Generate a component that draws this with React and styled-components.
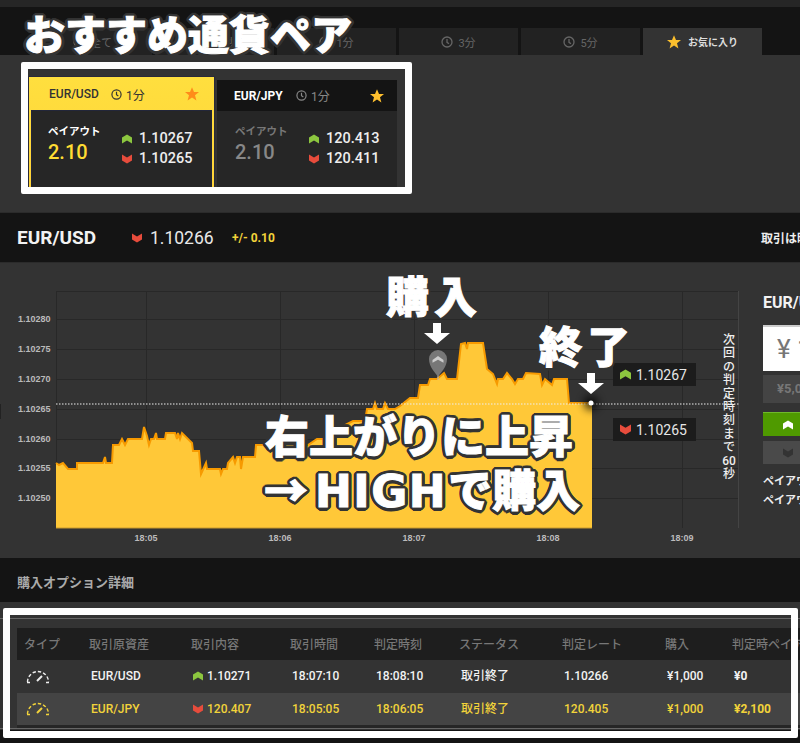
import React from "react";
import styled, { createGlobalStyle } from "styled-components";

const Global = createGlobalStyle`
  html, body { margin: 0; padding: 0; background: #141414; }
  body { font-family: Roboto, "Noto Sans CJK JP", sans-serif; }
  * { box-sizing: border-box; }
`;

const ring = (r, c) =>
  Array.from({ length: 16 }, (_, i) => {
    const a = (i / 16) * Math.PI * 2;
    return `${(Math.cos(a) * r).toFixed(2)}px ${(Math.sin(a) * r).toFixed(2)}px 0 ${c}`;
  }).join(",");

const Page = styled.div`
  position: relative; width: 800px; height: 743px; overflow: hidden;
  display: flex; flex-direction: column; background: #141414;
`;
const TopStrip = styled.div` height: 7px; background: #262626; flex: none; `;
const TabBar = styled.div`
  height: 48px; flex: none; background: #141414; padding: 21px 0 0 33px;
  display: flex; gap: 3px; align-items: stretch;
`;
const Tab = styled.div`
  width: 119px; flex: none; display: flex; align-items: center; justify-content: center; gap: ${p => (p.$active ? "7px" : "5px")};
  background: ${p => (p.$active ? "#333" : "#222")};
  color: ${p => (p.$active ? "#ddd" : "#666")};
  font-size: ${p => (p.$active ? "10px" : "11px")}; font-weight: ${p => (p.$active ? 700 : 400)};
`;
const Recommend = styled.section`
  height: 157px; flex: none; background: #333; display: flex; align-items: flex-start; padding: 22px 0 0 29px; gap: 3px;
`;
const CardShell = styled.div`
  width: ${p => (p.$on ? "185px" : "180px")}; height: ${p => (p.$on ? "115px" : "110px")};
  margin-top: ${p => (p.$on ? "0" : "3px")};
  display: flex; flex-direction: column;
  background: ${p => (p.$on ? "linear-gradient(#ffdf3e,#ffd338)" : "#262626")};
  box-shadow: ${p => (p.$on ? "0 0 0 1px #2a2a3a" : "none")};
`;
const CardHead = styled.div`
  height: ${p => (p.$on ? "34px" : "31px")}; flex: none; display: flex; align-items: center;
  padding: ${p => (p.$on ? "0 15px 0 20px" : "0 13px 0 17px")};
  background: ${p => (p.$on ? "transparent" : "#141414")};
  color: ${p => (p.$on ? "#333" : "#fff")};
  font-size: 12px; font-weight: ${p => (p.$on ? 500 : 700)};
`;
const PairName = styled.span` width: 62px; flex: none; `;
const Dur = styled.span`
  display: flex; align-items: center; gap: 4px; flex: 1; font-weight: 400; font-size: 12px;
  color: ${p => (p.$on ? "#333" : "#888")};
`;
const CardBody = styled.div`
  flex: 1; display: flex; background: #262626;
  margin: ${p => (p.$on ? "0 3px" : "0")};
  padding: ${p => (p.$on ? "14px 0 0 16px" : "14px 0 0 18px")};
  box-shadow: ${p => (p.$on ? "0 0 0 1px #22263a" : "none")};
`;
const Payout = styled.div` width: 74px; flex: none; `;
const PayLabel = styled.div`
  font-size: 10.5px; font-weight: 700; line-height: 14px; color: ${p => (p.$on ? "#fff" : "#777")};
`;
const PayValue = styled.div`
  font-size: 20px; font-weight: 500; line-height: 24px; margin-top: 1px; color: ${p => (p.$on ? "#ffdc33" : "#888")};
`;
const Prices = styled.div` display: flex; flex-direction: column; gap: 3px; padding-top: 5px; `;
const PriceLine = styled.div`
  display: flex; align-items: center; gap: 7px; height: 17px; color: #eee; font-size: 14.5px; font-weight: 500;
`;
const PairBar = styled.section`
  height: 50px; flex: none; background: #141414; display: flex; align-items: center; padding-left: 17px;
  border-top: 1px solid #2b2b2b;
`;
const PairTitle = styled.div` width: 115px; flex: none; color: #f2f2f2; font-size: 19px; font-weight: 700; `;
const PairPrice = styled.div`
  width: 100px; flex: none; display: flex; align-items: center; gap: 8px; color: #e8e8e8; font-size: 17.5px;
`;
const PairDiff = styled.div` width: 529px; flex: none; color: #f2d33a; font-size: 12px; font-weight: 700; `;
const PairNote = styled.div` flex: none; color: #eee; font-size: 12px; font-weight: 700; white-space: nowrap; `;
const ChartSection = styled.section`
  height: 296px; flex: none; background: #333; display: flex; border-top: 1px solid #2b2b2b;
`;
const ChartWrap = styled.div` position: relative; width: 763px; flex: none; `;
const ChartSvg = styled.svg` display: block; width: 763px; height: 296px; `;
const Chip = styled.div`
  position: absolute; left: 613px; top: ${p => p.$top}px; width: 83px; height: 23px; background: #1c1c1c;
  display: flex; align-items: center; gap: 5px; padding-left: 7px; color: #e6e6e6; font-size: 14px;
`;
const Countdown = styled.div`
  position: absolute; left: 719px; top: 71px; width: 20px; display: flex; flex-direction: column; align-items: center;
  color: #eee; font-size: 12px; line-height: 13.4px; font-weight: 500;
`;
const Side = styled.aside` width: 200px; flex: none; padding-top: 30px; `;
const SideTitle = styled.div` color: #f2f2f2; font-size: 16px; font-weight: 700; height: 32px; line-height: 20px; `;
const Amount = styled.div`
  height: 46px; background: #fff; border-top: 2px solid #ccc; color: #777; font-size: 26px; padding-left: 14px; line-height: 44px;
`;
const Quick = styled.div`
  height: 28px; margin-top: 4px; background: #444; color: #777; font-size: 13px; font-weight: 700; line-height: 28px; padding-left: 14px;
`;
const Action = styled.div`
  height: ${p => (p.$high ? "24px" : "23px")}; margin-top: ${p => (p.$high ? "9px" : "5px")};
  background: ${p => (p.$high ? "#4f9a00" : "#4a4a4a")}; border-top: ${p => (p.$high ? "1px solid #6fb82c" : "none")};
  color: #fff; display: flex; align-items: center; gap: 8px; padding-left: 20px; font-size: 11px; font-weight: 700;
`;
const SideNote = styled.div`
  color: #eee; font-size: 11px; font-weight: 700; line-height: 19px; white-space: nowrap;
  margin-top: ${p => (p.$first ? "8px" : "0")};
`;
const DetailBar = styled.div`
  height: 44px; flex: none; background: #141414; color: #aaa; font-size: 13px; font-weight: 700; padding: 17px 0 0 17px; line-height: 16px;
`;
const Detail = styled.section` height: 128px; flex: none; background: #333; padding-top: 16px; `;
const TableBox = styled.div`
  height: 111px; border-top: 1px solid #666; border-bottom: 1px solid #666; padding: 9px 0 0 17px; overflow: hidden;
`;
const Row = styled.div`
  display: grid; grid-template-columns: 65px 102px 99px 84px 85px 103px 103px 67px 130px; align-items: center;
  width: 830px; height: ${p => (p.$head ? "32px" : "32.5px")}; padding-left: ${p => (p.$head ? "7px" : "9px")};
  padding-top: ${p => (p.$head ? "1px" : "0")};
  background: ${p => (p.$head ? "#1e1e1e" : p.$alt ? "#444" : "#333")};
  color: ${p => (p.$head ? "#777" : p.$alt ? "#f2d33a" : "#f2f2f2")};
  font-size: 12px; white-space: nowrap;
`;
const TableEnd = styled.div` height: 3px; width: 830px; background: #262626; `;
const Cell = styled.div`
  display: flex; align-items: center; gap: 4px; line-height: 16px; height: 16px;
  font-weight: ${p => (p.$strong ? 700 : 500)};
`;
const Frame = styled.div`
  position: absolute; left: ${p => p.$x}px; top: ${p => p.$y}px; width: ${p => p.$w}px; height: ${p => p.$h}px;
  border: 7px solid #fff; border-radius: 2px; pointer-events: none;
`;
const Callout = styled.div`
  position: absolute; left: ${p => p.$x}px; top: ${p => p.$y}px; white-space: nowrap;
  font-family: "Noto Sans CJK JP", sans-serif; font-weight: 900; color: #fff; line-height: 1;
  font-size: ${p => p.$size}px; letter-spacing: ${p => p.$ls || 0}px;
  -webkit-text-stroke: 1px #fff;
  text-shadow: ${p => ring(p.$ring, "#333")};
`;
const Wide = styled.span`
  font-family: "DejaVu Sans", sans-serif; font-weight: 700; letter-spacing: 1.5px; margin: 0 1px 0 7px;
`;
const CalloutArrow = styled.svg` position: absolute; left: ${p => p.$x}px; top: ${p => p.$y}px; `;

const Up = ({ c = "#8cc63f", s = 10 }) => (
  <svg width={s} height={s} viewBox="0 0 10 10"><path d="M0 3.500 5 .5l5 3V9.500L5 6.500 0 9.500Z" fill={c} /></svg>
);
const Down = ({ c = "#e74c3c", s = 10 }) => (
  <svg width={s} height={s} viewBox="0 0 10 10"><path d="M0 .5 5 3.500l5-3V6.500l-5 3-5-3Z" fill={c} /></svg>
);
const Clock = ({ c, s = 11 }) => (
  <svg width={s} height={s} viewBox="0 0 12 12" fill="none" stroke={c} strokeWidth="1.3"><circle cx="6" cy="6" r="5" /><path d="M6 3v3.300l2 1.400" /></svg>
);
const Star = ({ c, s = 14 }) => (
  <svg width={s} height={s} viewBox="0 0 14 14"><path d="M7 .3 9 5h5l-4 3.200L11.400 13.600 7 10.600 2.600 13.600 4 8.200 0 5h5Z" fill={c} /></svg>
);
const Gauge = ({ c }) => (
  <svg width="24" height="15" viewBox="0 3 24 15" fill="none" stroke={c} strokeWidth="1.4">
    <path d="M1.500 16a10.500 10.500 0 0 1 21 0" strokeDasharray="3.400 2" />
    <path d="M1 16.500h3M20 16.500h3" />
    <path d="M11 15l5-5" strokeWidth="2" />
  </svg>
);

const area = "56,462 59,464 63,462 68,468 77,468 77,462 103,462 105,456 106,462 112,462 113,444 119,444 122,438 125,444 128,438 142,438 144,426 147,435 149,444 151,438 154,438 156,432 157,438 165,438 166,432 175,432 177,438 178,432 180,438 182,432 192,442 193,450 199,450 201,473 206,462 207,468 220,468 221,473 223,468 227,468 228,462 233,456 235,462 237,456 240,456 241,468 243,456 255,456 256,444 263,444 272,438 300,444 308,444 317,438 330,438 345,424 353,420 365,420 367,408 373,408 375,402 377,408 383,408 385,402 388,408 395,408 400,405 410,397 418,397 420,384 428,384 430,378 437,378 444,372 447,378 450,378 457,378 461,343 465,342 467,348 468,342 483,342 487,368 493,373 497,383 498,378 503,378 507,372 512,378 515,383 518,378 523,378 526,372 540,373 542,384 545,378 552,384 554,378 567,378 569,402 592,402";
const yLabels = [["1.10280", 318], ["1.10275", 348], ["1.10270", 378], ["1.10265", 408], ["1.10260", 438], ["1.10255", 467], ["1.10250", 497]];
const xLabels = [["18:05", 146], ["18:06", 280], ["18:07", 414], ["18:08", 548], ["18:09", 682]];

const Chart = () => (
  <ChartSvg viewBox="0 262 763 296">
    <defs>
      <filter id="glow" x="-200%" y="-200%" width="500%" height="500%"><feGaussianBlur stdDeviation="4" /></filter>
    </defs>
    <rect x="0" y="403" width="1" height="15" fill="#222" />
    <g stroke="#282828" strokeWidth="1">
      {yLabels.map(([, y]) => <line key={y} x1="56" x2="739" y1={y + .5} y2={y + .5} />)}
      <line x1="56" x2="739" y1="290.500" y2="290.500" />
      {xLabels.map(([, x]) => <line key={x} x1={x + .5} x2={x + .5} y1="290" y2="527" />)}
      <line x1="56.500" x2="56.500" y1="290" y2="527" />
    </g>
    <line x1="738.500" x2="738.500" y1="290" y2="527" stroke="#444" />
    <polygon points={`${area} 592,527 56,527`} fill="#ffc838" />
    <polyline points={area} fill="none" stroke="#f79a00" strokeWidth="2" strokeLinejoin="miter" />
    <line x1="56" x2="592" y1="527" y2="527" stroke="#c89a2c" strokeWidth="1" />
    <line x1="56" x2="739" y1="403" y2="403" stroke="#eee" strokeDasharray="1.500 1.500" />
    <circle cx="591" cy="402" r="7" fill="#000" opacity=".8" filter="url(#glow)" />
    <circle cx="591" cy="402" r="2.500" fill="#fff" />
    <g fill="#bbb" fontFamily="Liberation Sans" fontSize="9" fontWeight="700">
      {yLabels.map(([t, y]) => <text key={t} x="18" y={y + 2.5}>{t}</text>)}
      {xLabels.map(([t, x]) => <text key={t} x={x} y="540" textAnchor="middle">{t}</text>)}
    </g>
    <line x1="438" x2="438" y1="370" y2="379" stroke="#bbb" />
    <path d="M438 376c-3-5-9-10-9-18a9 9 0 0 1 18 0c0 8-6 13-9 18Z" fill="#777" />
    <path d="M432.500 359 438 355l5.500 4v2.800l-5.500-3-5.500 3Z" fill="#ccc" />
  </ChartSvg>
);

const count = ["次", "回", "の", "判", "定", "時", "刻", "ま", "で", "60", "秒"];
const tabs = ["全て", "30秒", "1分", "3分", "5分"];

const PairCard = ({ on, name, up, down }) => (
  <CardShell $on={on}>
    <CardHead $on={on}>
      <PairName>{name}</PairName>
      <Dur $on={on}><Clock c={on ? "#333" : "#888"} />1分</Dur>
      <Star c={on ? "#ff8c1a" : "#ffc02e"} />
    </CardHead>
    <CardBody $on={on}>
      <Payout>
        <PayLabel $on={on}>ペイアウト</PayLabel>
        <PayValue $on={on}>2.10</PayValue>
      </Payout>
      <Prices>
        <PriceLine><Up />{up}</PriceLine>
        <PriceLine><Down />{down}</PriceLine>
      </Prices>
    </CardBody>
  </CardShell>
);

const rows = [
  { pair: "EUR/USD", rate: "1.10271", up: true, start: "18:07:10", end: "18:08:10", fin: "1.10266", pay: "¥0" },
  { pair: "EUR/JPY", rate: "120.407", up: false, start: "18:05:05", end: "18:06:05", fin: "120.405", pay: "¥2,100", alt: true },
];
const heads = ["タイプ", "取引原資産", "取引内容", "取引時間", "判定時刻", "ステータス", "判定レート", "購入", "判定時ペイアウト"];

export default function App() {
  return (
    <Page>
      <Global />
      <TopStrip />
      <TabBar>
        {tabs.map(t => <Tab key={t}><Clock c="#666" s={12} />{t}</Tab>)}
        <Tab $active><Star c="#fbbf2d" />お気に入り</Tab>
      </TabBar>
      <Recommend>
        <PairCard on name="EUR/USD" up="1.10267" down="1.10265" />
        <PairCard name="EUR/JPY" up="120.413" down="120.411" />
      </Recommend>
      <PairBar>
        <PairTitle>EUR/USD</PairTitle>
        <PairPrice><Down />1.10266</PairPrice>
        <PairDiff>+/- 0.10</PairDiff>
        <PairNote>取引は時間内</PairNote>
      </PairBar>
      <ChartSection>
        <ChartWrap>
          <Chart />
          <Chip $top={100}><Up s={11} />1.10267</Chip>
          <Chip $top={155}><Down s={11} />1.10265</Chip>
          <Countdown>{count.map(c => <span key={c}>{c}</span>)}</Countdown>
        </ChartWrap>
        <Side>
          <SideTitle>EUR/USD</SideTitle>
          <Amount>¥ 1,000</Amount>
          <Quick>¥5,000</Quick>
          <Action $high><Up c="#fff" />HIGH</Action>
          <Action><Down c="#333" />LOW</Action>
          <SideNote $first>ペイアウト</SideNote>
          <SideNote>ペイアウト</SideNote>
        </Side>
      </ChartSection>
      <DetailBar>購入オプション詳細</DetailBar>
      <Detail>
        <TableBox>
          <Row $head>{heads.map(h => <Cell key={h}>{h}</Cell>)}</Row>
          {rows.map(r => (
            <Row key={r.pair} $alt={r.alt}>
              <Cell><Gauge c={r.alt ? "#f2d33a" : "#eee"} /></Cell>
              <Cell>{r.pair}</Cell>
              <Cell>{r.up ? <Up /> : <Down />}{r.rate}</Cell>
              <Cell>{r.start}</Cell>
              <Cell>{r.end}</Cell>
              <Cell>取引終了</Cell>
              <Cell>{r.fin}</Cell>
              <Cell>¥1,000</Cell>
              <Cell $strong>{r.pay}</Cell>
            </Row>
          ))}
          <TableEnd />
        </TableBox>
      </Detail>
      <Frame $x={21} $y={62} $w={391} $h={132} />
      <Frame $x={3} $y={608} $w={795} $h={130} />
      <Callout $x={24} $y={12} $size={41} $ring={3.5}>おすすめ通貨ペア</Callout>
      <Callout $x={386} $y={273} $size={43} $ls={5} $ring={2.5}>購入</Callout>
      <Callout $x={539} $y={323} $size={43} $ls={5} $ring={2.5}>終了</Callout>
      <Callout $x={265} $y={412} $size={44} $ring={3.5}>右上がりに上昇</Callout>
      <Callout $x={264} $y={466} $size={44} $ring={3.5}>→<Wide>HIGH</Wide>で購入</Callout>
      <CalloutArrow $x={424} $y={323} width="26" height="21" viewBox="0 0 26 21"><path d="M9 0h8v10h9L13 21 0 10h9Z" fill="#fff" /></CalloutArrow>
      <CalloutArrow $x={578} $y={373} width="26" height="21" viewBox="0 0 26 21"><path d="M9 0h8v10h9L13 21 0 10h9Z" fill="#fff" /></CalloutArrow>
    </Page>
  );
}
